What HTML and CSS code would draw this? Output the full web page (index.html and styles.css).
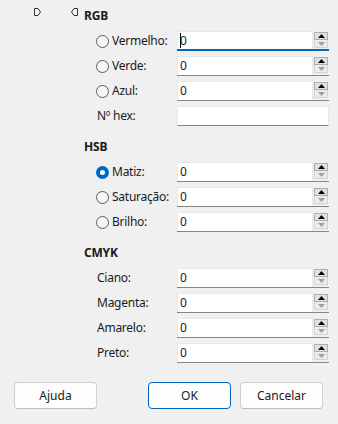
FILE: index.html
```html
<!DOCTYPE html>
<html lang="pt">
<head>
    <meta charset="UTF-8">
    <meta name="viewport" content="width=device-width, initial-scale=1.0">
    <title>Cor</title>
    <link rel="stylesheet" href="styles.css">
</head>
<body>
    <div class="dialog">
        <div class="panel">
            <div class="slider-marks">
                <svg width="8" height="8" viewBox="0 0 8 8"><path d="M0.5 0.5 H4 L6.5 4 L4 7.5 H0.5 Z" fill="none" stroke="#333"/></svg>
                <svg width="8" height="8" viewBox="0 0 8 8"><path d="M7.5 0.5 H4 L1.5 4 L4 7.5 H7.5 Z" fill="none" stroke="#333"/></svg>
            </div>
            <div class="fields">
                <div class="group-title">RGB</div>
                <div class="row">
                    <div class="label"><span class="radio"></span>Vermelho:</div>
                    <div class="spin focused">
                        <div class="spin-input"><span class="caret"></span>0</div>
                        <div class="spin-buttons">
                            <span class="spin-up"><svg width="7" height="4" viewBox="0 0 7 4"><path d="M0 4 L3.5 0 L7 4 Z" fill="#000"/></svg></span>
                            <span class="spin-down"><svg width="7" height="4" viewBox="0 0 7 4"><path d="M0 0 L3.5 4 L7 0 Z" fill="#a0a0a0"/></svg></span>
                        </div>
                    </div>
                </div>
                <div class="row">
                    <div class="label"><span class="radio"></span>Verde:</div>
                    <div class="spin">
                        <div class="spin-input">0</div>
                        <div class="spin-buttons">
                            <span class="spin-up"><svg width="7" height="4" viewBox="0 0 7 4"><path d="M0 4 L3.5 0 L7 4 Z" fill="#000"/></svg></span>
                            <span class="spin-down"><svg width="7" height="4" viewBox="0 0 7 4"><path d="M0 0 L3.5 4 L7 0 Z" fill="#a0a0a0"/></svg></span>
                        </div>
                    </div>
                </div>
                <div class="row">
                    <div class="label"><span class="radio"></span>Azul:</div>
                    <div class="spin">
                        <div class="spin-input">0</div>
                        <div class="spin-buttons">
                            <span class="spin-up"><svg width="7" height="4" viewBox="0 0 7 4"><path d="M0 4 L3.5 0 L7 4 Z" fill="#000"/></svg></span>
                            <span class="spin-down"><svg width="7" height="4" viewBox="0 0 7 4"><path d="M0 0 L3.5 4 L7 0 Z" fill="#a0a0a0"/></svg></span>
                        </div>
                    </div>
                </div>
                <div class="row">
                    <div class="label plain">Nº hex:</div>
                    <div class="text-input"></div>
                </div>

                <div class="group-title">HSB</div>
                <div class="row">
                    <div class="label"><span class="radio checked"></span>Matiz:</div>
                    <div class="spin">
                        <div class="spin-input">0</div>
                        <div class="spin-buttons">
                            <span class="spin-up"><svg width="7" height="4" viewBox="0 0 7 4"><path d="M0 4 L3.5 0 L7 4 Z" fill="#000"/></svg></span>
                            <span class="spin-down"><svg width="7" height="4" viewBox="0 0 7 4"><path d="M0 0 L3.5 4 L7 0 Z" fill="#a0a0a0"/></svg></span>
                        </div>
                    </div>
                </div>
                <div class="row">
                    <div class="label"><span class="radio"></span>Saturação:</div>
                    <div class="spin">
                        <div class="spin-input">0</div>
                        <div class="spin-buttons">
                            <span class="spin-up"><svg width="7" height="4" viewBox="0 0 7 4"><path d="M0 4 L3.5 0 L7 4 Z" fill="#000"/></svg></span>
                            <span class="spin-down"><svg width="7" height="4" viewBox="0 0 7 4"><path d="M0 0 L3.5 4 L7 0 Z" fill="#a0a0a0"/></svg></span>
                        </div>
                    </div>
                </div>
                <div class="row">
                    <div class="label"><span class="radio"></span>Brilho:</div>
                    <div class="spin">
                        <div class="spin-input">0</div>
                        <div class="spin-buttons">
                            <span class="spin-up"><svg width="7" height="4" viewBox="0 0 7 4"><path d="M0 4 L3.5 0 L7 4 Z" fill="#000"/></svg></span>
                            <span class="spin-down"><svg width="7" height="4" viewBox="0 0 7 4"><path d="M0 0 L3.5 4 L7 0 Z" fill="#a0a0a0"/></svg></span>
                        </div>
                    </div>
                </div>

                <div class="group-title">CMYK</div>
                <div class="row">
                    <div class="label plain">Ciano:</div>
                    <div class="spin">
                        <div class="spin-input">0</div>
                        <div class="spin-buttons">
                            <span class="spin-up"><svg width="7" height="4" viewBox="0 0 7 4"><path d="M0 4 L3.5 0 L7 4 Z" fill="#000"/></svg></span>
                            <span class="spin-down"><svg width="7" height="4" viewBox="0 0 7 4"><path d="M0 0 L3.5 4 L7 0 Z" fill="#a0a0a0"/></svg></span>
                        </div>
                    </div>
                </div>
                <div class="row">
                    <div class="label plain">Magenta:</div>
                    <div class="spin">
                        <div class="spin-input">0</div>
                        <div class="spin-buttons">
                            <span class="spin-up"><svg width="7" height="4" viewBox="0 0 7 4"><path d="M0 4 L3.5 0 L7 4 Z" fill="#000"/></svg></span>
                            <span class="spin-down"><svg width="7" height="4" viewBox="0 0 7 4"><path d="M0 0 L3.5 4 L7 0 Z" fill="#a0a0a0"/></svg></span>
                        </div>
                    </div>
                </div>
                <div class="row">
                    <div class="label plain">Amarelo:</div>
                    <div class="spin">
                        <div class="spin-input">0</div>
                        <div class="spin-buttons">
                            <span class="spin-up"><svg width="7" height="4" viewBox="0 0 7 4"><path d="M0 4 L3.5 0 L7 4 Z" fill="#000"/></svg></span>
                            <span class="spin-down"><svg width="7" height="4" viewBox="0 0 7 4"><path d="M0 0 L3.5 4 L7 0 Z" fill="#a0a0a0"/></svg></span>
                        </div>
                    </div>
                </div>
                <div class="row">
                    <div class="label plain">Preto:</div>
                    <div class="spin">
                        <div class="spin-input">0</div>
                        <div class="spin-buttons">
                            <span class="spin-up"><svg width="7" height="4" viewBox="0 0 7 4"><path d="M0 4 L3.5 0 L7 4 Z" fill="#000"/></svg></span>
                            <span class="spin-down"><svg width="7" height="4" viewBox="0 0 7 4"><path d="M0 0 L3.5 4 L7 0 Z" fill="#a0a0a0"/></svg></span>
                        </div>
                    </div>
                </div>
            </div>
        </div>

        <div class="buttons">
            <button class="btn">Ajuda</button>
            <div class="spacer"></div>
            <button class="btn default">OK</button>
            <button class="btn">Cancelar</button>
        </div>
    </div>
</body>
</html>
```

FILE: styles.css
```css
* {
    margin: 0;
    padding: 0;
    box-sizing: border-box;
}

body {
    font-family: "Noto Sans", "Open Sans", sans-serif;
    font-size: 12px;
    color: #1a1a1a;
    background-color: #f0f0f0;
    width: 338px;
    height: 424px;
    overflow: hidden;
}

.dialog {
    display: flex;
    flex-direction: column;
}

.panel {
    display: flex;
}

.slider-marks {
    width: 84px;
    padding-left: 34px;
    padding-top: 8px;
    display: flex;
    gap: 28px;
    align-items: flex-start;
}

.slider-marks svg {
    display: block;
}

.fields {
    flex: 1;
    padding-top: 8px;
}

.group-title {
    font-weight: bold;
    line-height: 16px;
    margin-bottom: 7px;
    letter-spacing: -0.2px;
}

.row + .group-title {
    margin-top: 13px;
}

.row {
    display: flex;
    align-items: center;
    height: 20px;
    margin-bottom: 5px;
    padding-left: 12px;
}

.label {
    width: 81px;
    display: flex;
    align-items: center;
    line-height: 20px;
    white-space: nowrap;
    letter-spacing: -0.25px;
}

.label.plain {
    padding-left: 1px;
}

.radio {
    width: 13px;
    height: 13px;
    border: 1px solid #5c5c5c;
    border-radius: 50%;
    background-color: #f6f6f6;
    margin-right: 3px;
    flex-shrink: 0;
}

.radio.checked {
    border: 4px solid #0067c0;
    background-color: #fff;
}

.spin {
    width: 152px;
    height: 20px;
    display: flex;
    border-bottom: 1px solid #868686;
}

.spin.focused {
    border-bottom: 2px solid #0067c0;
}

.spin-input {
    flex: 1;
    background-color: #fff;
    border: 1px solid #e8e8e8;
    border-bottom: none;
    padding-left: 2px;
    line-height: 18px;
    display: flex;
    align-items: center;
}

.caret {
    width: 1px;
    height: 15px;
    background-color: #000;
    margin-right: -1px;
}

.spin-buttons {
    width: 16px;
    padding: 1px 1px 0 1px;
    display: flex;
    flex-direction: column;
}

.spin-up,
.spin-down {
    height: 8px;
    display: flex;
    align-items: center;
    justify-content: center;
}

.spin-up {
    background-color: #e1e1e1;
    border: 1px solid #adadad;
}

.spin-down {
    background-color: #ececec;
    border: 1px solid #d4d4d4;
    border-top: none;
}

.spin-up svg,
.spin-down svg {
    display: block;
}

.text-input {
    width: 152px;
    height: 20px;
    background-color: #fff;
    border: 1px solid #e8e8e8;
    border-bottom: 1px solid #868686;
}

.buttons {
    display: flex;
    margin-top: 14px;
    padding: 0 15px 0 14px;
    gap: 9px;
}

.spacer {
    flex: 1;
}

.btn {
    width: 83px;
    height: 27px;
    font-family: inherit;
    font-size: 12px;
    color: #1a1a1a;
    background-color: #fdfdfd;
    border: 1px solid #d0d0d0;
    border-bottom-color: #bcbcbc;
    border-radius: 4px;
}

.btn.default {
    border: 1px solid #0067c0;
}
```
